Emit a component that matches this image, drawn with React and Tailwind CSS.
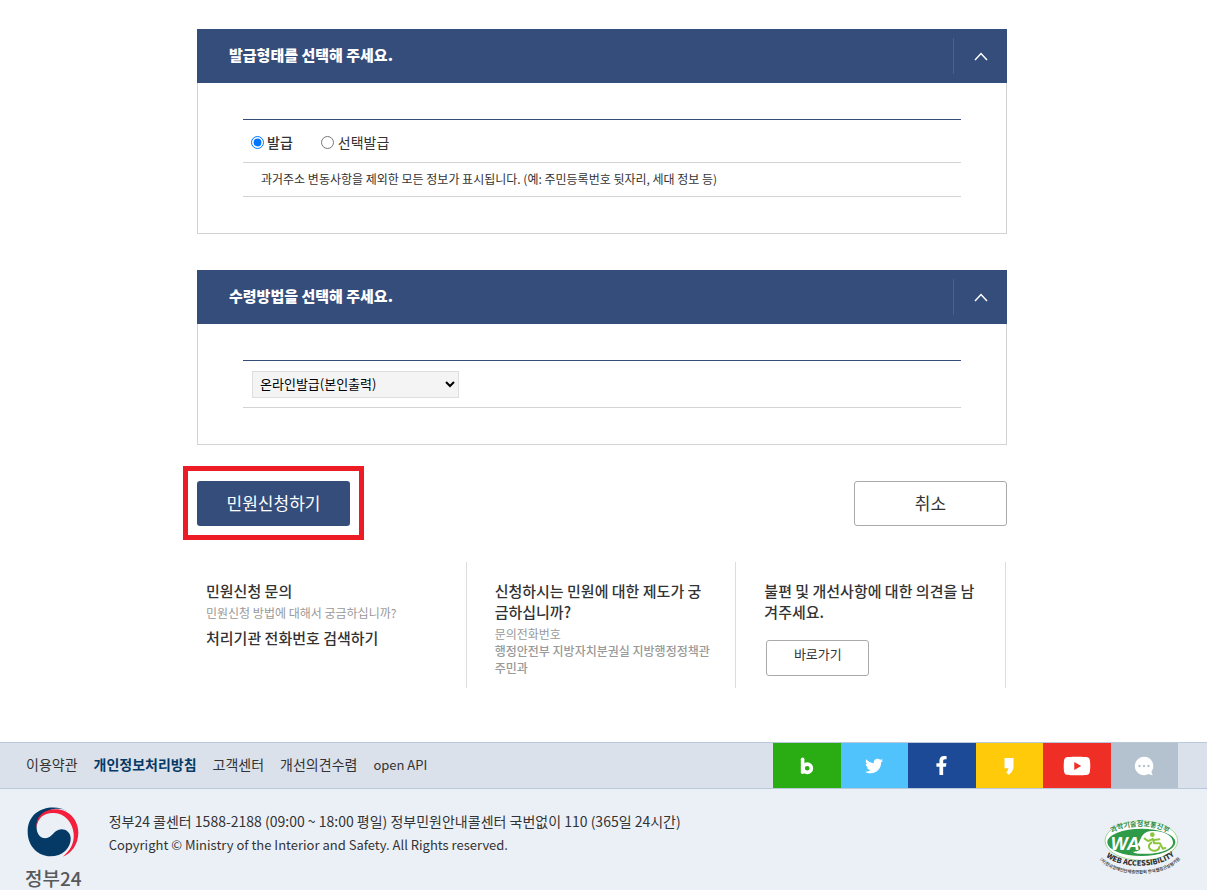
import { FaTwitter, FaFacebookF, FaYoutube } from "react-icons/fa";

function Panel({ title, children }) {
  return (
    <section className="mb-9">
      <header className="flex h-[54px] items-center justify-between bg-[#344d7a] pl-8 text-white">
        <h2 className="pb-0.5 text-[15px] font-black">{title}</h2>
        <button
          type="button"
          aria-label="접기"
          className="flex h-9 w-[54px] items-center justify-center border-l border-[#4a6190]"
        >
          <svg width="14" height="9" viewBox="0 0 14 9" fill="none" stroke="currentColor" strokeWidth="1.5">
            <path d="M1 8 7 1.500 13 8" />
          </svg>
        </button>
      </header>
      <div className="border border-t-0 border-[#d3d3d3] px-[45px] py-9">
        <div className="border-t border-[#344d7a]">{children}</div>
      </div>
    </section>
  );
}

function BlogIcon() {
  return (
    <svg width="14" height="18" viewBox="0 0 12 16" fill="none" stroke="currentColor" strokeWidth="3.2" aria-hidden="true">
      <circle cx="6.200" cy="10" r="3.700" />
      <line x1="2.100" y1="2" x2="2.100" y2="13.500" strokeLinecap="round" />
    </svg>
  );
}

function KakaoStoryIcon() {
  return (
    <svg width="12" height="20" viewBox="0 0 12 20" fill="currentColor" aria-hidden="true">
      <path d="M1.500 2h9v8.500c0 3.600-1.700 6.200-4.700 8.300L3.200 16.600c1.400-1.400 2-2.800 2.100-4.400H1.500z" />
    </svg>
  );
}

function ChatIcon() {
  return (
    <svg width="20" height="20" viewBox="0 0 20 20" aria-hidden="true">
      <path
        d="M10 .8a9.200 9.200 0 1 0 4.600 17.200c1.200.8 2.600 1.200 4.200 1.100-.8-1.100-1.200-2.200-1.300-3.700A9.200 9.200 0 0 0 10 .8z"
        fill="#fff"
      />
      <g fill="#b4c2cf">
        <circle cx="5.500" cy="10" r="1.200" />
        <circle cx="10" cy="10" r="1.200" />
        <circle cx="14.500" cy="10" r="1.200" />
      </g>
    </svg>
  );
}

const socials = [
  { name: "블로그", bg: "bg-[#2aad12]", icon: <BlogIcon /> },
  { name: "트위터", bg: "bg-[#50c3fc]", icon: <FaTwitter size={18} /> },
  { name: "페이스북", bg: "bg-[#1c4a97]", icon: <FaFacebookF size={19} /> },
  { name: "카카오스토리", bg: "bg-[#ffca0a]", icon: <KakaoStoryIcon /> },
  { name: "유튜브", bg: "bg-[#ef2e25]", icon: <FaYoutube size={28} /> },
  { name: "채팅", bg: "bg-[#b4c2cf]", icon: <ChatIcon /> },
];

function GovLogo() {
  return (
    <svg width="52" height="52" viewBox="52 34 157 157" aria-hidden="true">
      <path
        d="M180 54C140 24 54 36 54 112C54 158 88 186 122 186C160 186 184 160 184 132C184 114 170 104 156 104C132 104 130 131 107 131C92 131 81 118 81 98C81 66 110 42 146 42C160 42 171 47 180 54Z"
        fill="#063a66"
      />
      <path
        d="M81 98C78 66 104 44 138 44C178 44 207 76 207 114C207 150 186 178 160 187C183 169 195 146 193 118C190 82 166 57 134 55C104 53 84 70 81 98Z"
        fill="#f31f3d"
      />
    </svg>
  );
}

function WaMark() {
  return (
    <svg width="84" height="62" viewBox="0 0 252 186" role="img" aria-label="WA Web Accessibility">
      <defs>
        <path id="wa-top" d="M34 58C74 22 178 22 218 58" />
        <path id="wa-mid" d="M22 120C66 160 186 160 232 116" />
        <path id="wa-low" d="M4 128C50 188 200 188 248 128" />
      </defs>
      <ellipse cx="130" cy="74" rx="109" ry="59" fill="#fff" stroke="#a9d68c" strokeWidth="3" />
      <ellipse cx="130" cy="79" rx="102" ry="41" fill="#2f9a48" />
      <path
        d="M117 86C130 80 124 48 160 45C196 42 226 60 225 80C223 102 180 116 124 113C112 112 106 109 104 107C122 108 138 96 117 86Z"
        fill="#fff"
      />
      <text x="38" y="101" fontSize="54" fontWeight="800" fontStyle="italic" fill="#fff" fontFamily="Liberation Sans, sans-serif">
        WA
      </text>
      <g fill="none" stroke="#8cc63f" strokeWidth="6" strokeLinecap="round" strokeLinejoin="round">
        <circle cx="163" cy="56" r="4" fill="#8cc63f" />
        <path d="M164 68 169 82 186 82 194 98 202 96M163 70 150 75 140 68M160 80C146 90 154 106 172 104 180 102 184 98 184 92" />
        <path d="M168 72 184 70" />
      </g>
      <g fontFamily="Noto Sans CJK KR, sans-serif" textAnchor="middle">
        <text fontSize="21" fontWeight="700" fill="#2f8a45">
          <textPath href="#wa-top" startOffset="50%">과학기술정보통신부</textPath>
        </text>
        <text fontSize="22" fontWeight="900" fill="#333">
          <textPath href="#wa-mid" startOffset="50%">WEB ACCESSIBILITY</textPath>
        </text>
        <text fontSize="13" fontWeight="700" fill="#444">
          <textPath href="#wa-low" startOffset="50%">(사)한국장애인단체총연합회 한국웹접근성평가원</textPath>
        </text>
      </g>
    </svg>
  );
}

export default function App() {
  return (
    <div className="min-h-screen bg-white font-['Noto_Sans_CJK_KR',sans-serif] text-sm text-[#333]">
      <main className="pt-[29px] pr-[19px] pb-[54px] pl-4">
        <div className="mx-auto max-w-[810px]">
          <Panel title="발급형태를 선택해 주세요.">
            <div className="flex h-[43px] items-center gap-7 border-b border-[#d3d3d3] pt-0.5 pl-2">
              <label className="flex items-center gap-[3px] font-medium">
                <input type="radio" name="issue" defaultChecked className="size-[13px]" />
                발급
              </label>
              <label className="flex items-center gap-1">
                <input type="radio" name="issue" className="size-[13px]" />
                선택발급
              </label>
            </div>
            <p className="flex h-[34px] items-center border-b border-[#d3d3d3] pb-0.5 pl-[18px] text-xs">
              과거주소 변동사항을 제외한 모든 정보가 표시됩니다. (예: 주민등록번호 뒷자리, 세대 정보 등)
            </p>
          </Panel>

          <Panel title="수령방법을 선택해 주세요.">
            <div className="flex h-[47px] items-center border-b border-[#d3d3d3] pl-[9px]">
              <select
                aria-label="수령방법"
                className="h-[27px] w-[207px] border border-[#ddd] bg-[#f4f4f4] px-[3px] pb-0.5 text-[13px] text-black"
              >
                <option>온라인발급(본인출력)</option>
              </select>
            </div>
          </Panel>

          <div className="flex justify-between text-[17px]">
            <div className="relative">
              <button type="button" className="h-[45px] w-[153px] rounded-[3px] bg-[#344d7a] text-white">
                민원신청하기
              </button>
              <div className="pointer-events-none absolute -inset-x-3.5 -top-[15px] -bottom-3.5 border-[5px] border-[#ed1c24]" />
            </div>
            <button type="button" className="h-[45px] w-[153px] rounded-[3px] border border-[#aaa]">
              취소
            </button>
          </div>

          <div className="mt-9 mr-px grid min-h-[126px] grid-cols-3 text-xs leading-[17px] text-[#999]">
            <div className="border-r border-[#ddd] pt-[18px] pr-[22px] pl-[9px]">
              <h3 className="text-[15px] leading-[21px] font-medium text-[#333]">민원신청 문의</h3>
              <p className="mt-[3px]">민원신청 방법에 대해서 궁금하십니까?</p>
              <a href="#search" className="mt-1.5 block text-[15px] leading-[21px] font-medium text-[#333]">
                처리기관 전화번호 검색하기
              </a>
            </div>
            <div className="border-r border-[#ddd] pt-[18px] pr-[22px] pl-7">
              <h3 className="text-[15px] leading-[21px] font-medium text-[#333]">
                신청하시는 민원에 대한 제도가 궁금하십니까?
              </h3>
              <p className="mt-[3px]">문의전화번호</p>
              <p className="font-medium">행정안전부 지방자치분권실 지방행정정책관 주민과</p>
            </div>
            <div className="border-r border-[#ddd] pt-[18px] pr-[22px] pl-7">
              <h3 className="text-[15px] leading-[21px] font-medium text-[#333]">
                불편 및 개선사항에 대한 의견을 남겨주세요.
              </h3>
              <button
                type="button"
                className="mt-[18px] ml-0.5 h-9 w-[103px] rounded-[3px] border border-[#aaa] pb-2.5 text-[13px] text-[#333]"
              >
                바로가기
              </button>
            </div>
          </div>
        </div>
      </main>

      <footer className="bg-[#ebf0f7]">
        <div className="flex h-[47px] items-center justify-between border-y border-[#b9c8da] bg-[#dae1ea] pr-[29px] pl-[26px]">
          <nav className="flex items-baseline gap-4 pb-0.5">
            <a href="#terms">이용약관</a>
            <a href="#privacy" className="font-bold text-[#063a66]">개인정보처리방침</a>
            <a href="#support">고객센터</a>
            <a href="#opinion">개선의견수렴</a>
            <a href="#api" className="text-[13px]">open API</a>
          </nav>
          <div className="grid h-full w-[405px] grid-cols-6">
            {socials.map((s) => (
              <a
                key={s.name}
                href="#social"
                aria-label={s.name}
                className={`flex items-center justify-center text-white ${s.bg}`}
              >
                {s.icon}
              </a>
            ))}
          </div>
        </div>
        <div className="flex items-start pt-[17px] pr-[25px] pl-[25px]">
          <div className="flex flex-col items-center">
            <GovLogo />
            <span className="mt-2 text-[19px] leading-6 font-medium text-[#58595b]">정부24</span>
          </div>
          <div className="ml-[27px] pt-1 leading-[23px]">
            <p>정부24 콜센터 1588-2188 (09:00 ~ 18:00 평일) 정부민원안내콜센터 국번없이 110 (365일 24시간)</p>
            <p className="text-[13px] leading-[23px]">
              Copyright © Ministry of the Interior and Safety. All Rights reserved.
            </p>
          </div>
          <div className="mt-2.5 ml-auto">
            <WaMark />
          </div>
        </div>
      </footer>
    </div>
  );
}
